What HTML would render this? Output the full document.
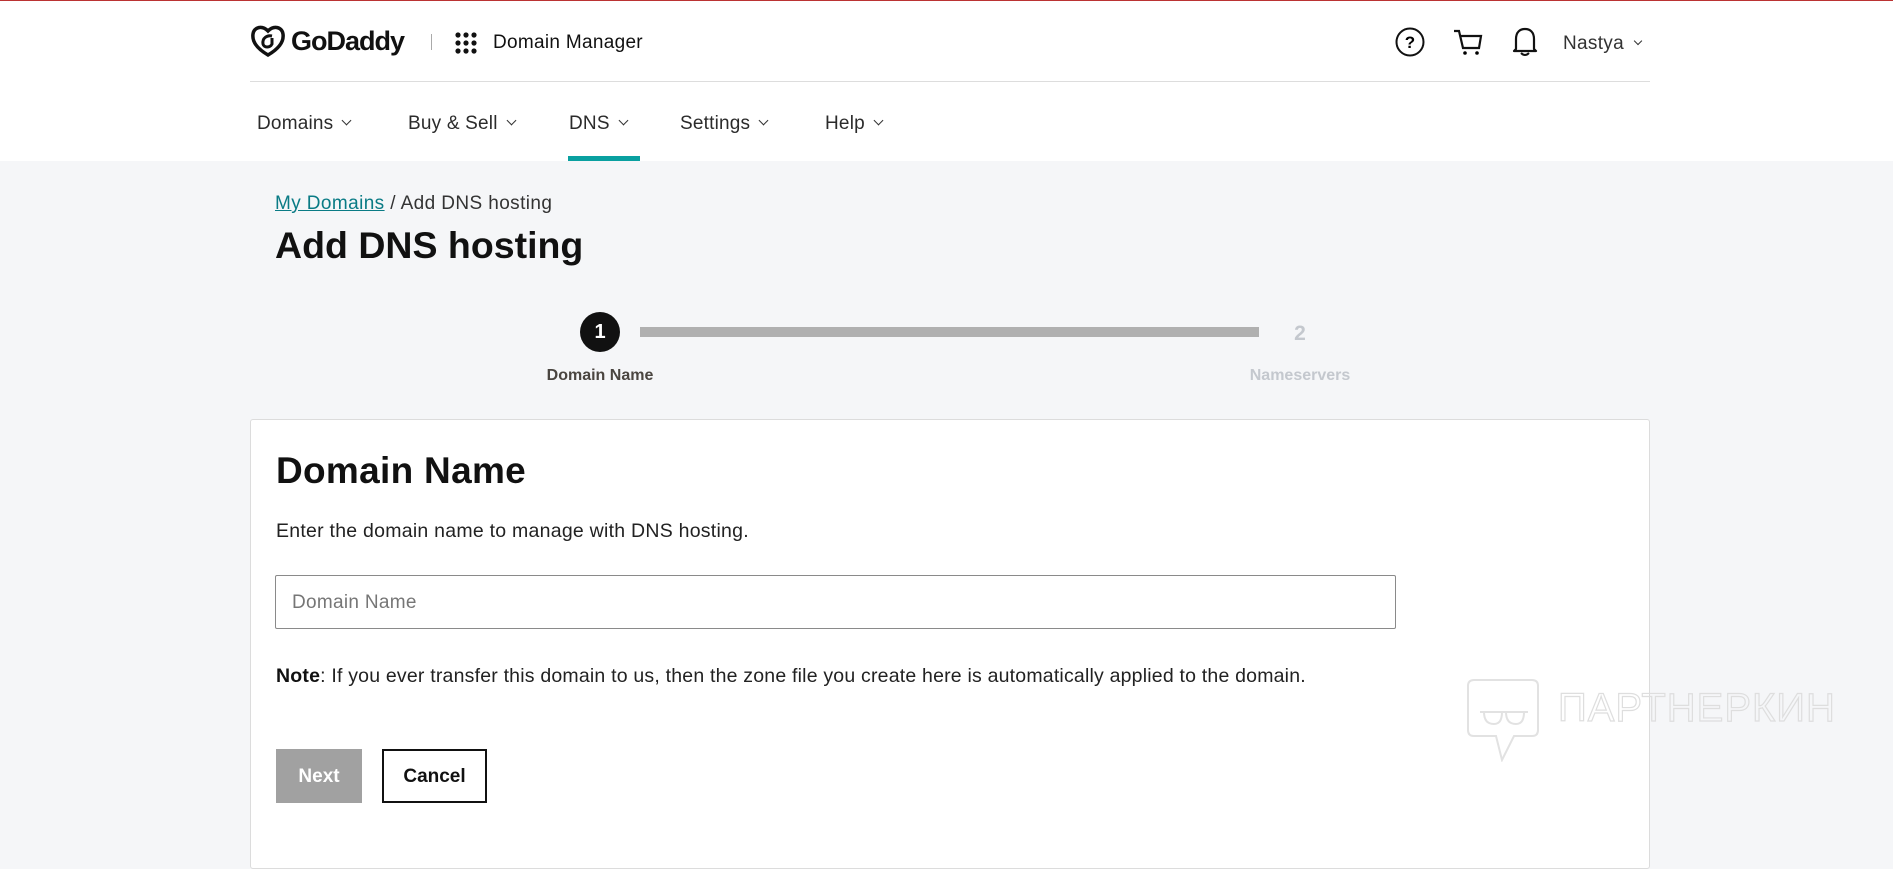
<!DOCTYPE html>
<html><head><meta charset="utf-8"><style>
*{margin:0;padding:0;box-sizing:border-box}
body{width:1893px;height:812px;overflow:hidden;background:#f5f6f8;font-family:"Liberation Sans",sans-serif;color:#111;position:relative}
.abs{position:absolute}
.hdr{position:absolute;left:0;top:0;width:1893px;height:161px;background:#fff;border-top:1px solid #b33}
.nav{position:absolute;top:112px;font-size:19px;color:#2b2b2b;white-space:nowrap;letter-spacing:0.2px}
.chev{display:inline-block;width:7px;height:7px;border-right:1.6px solid #333;border-bottom:1.6px solid #333;transform:rotate(45deg);margin-left:10px;position:relative;top:-5px}
</style></head><body>
<div class="hdr">
  <svg class="abs" style="left:250px;top:23px" width="36" height="34" viewBox="0 0 36 34"><path d="M18 31C6 24 2 17 3 10 4 3 12 1 18 7 24 1 32 3 33 10 34 17 30 24 18 31Z" fill="none" stroke="#111" stroke-width="3.5"/><path d="M22 12C17 11 12 14 13 20 14 24 20 24 22 20L22 14" fill="none" stroke="#111" stroke-width="3"/></svg>
  <div class="abs" style="left:291px;top:25px;font-size:27px;font-weight:bold;letter-spacing:-1px">GoDaddy</div>
  <div class="abs" style="left:431px;top:33px;width:1px;height:16px;background:#aaa"></div>
  <svg class="abs" style="left:455px;top:31px" width="22" height="22"><g fill="#111"><circle cx="3" cy="3" r="2.6"/><circle cx="11" cy="3" r="2.6"/><circle cx="19" cy="3" r="2.6"/><circle cx="3" cy="11" r="2.6"/><circle cx="11" cy="11" r="2.6"/><circle cx="19" cy="11" r="2.6"/><circle cx="3" cy="19" r="2.6"/><circle cx="11" cy="19" r="2.6"/><circle cx="19" cy="19" r="2.6"/></g></svg>
  <div class="abs" style="left:493px;top:31px;font-size:19px;letter-spacing:0.3px">Domain Manager</div>
  <svg class="abs" style="left:1395px;top:26px" width="30" height="30"><circle cx="15" cy="15" r="13.5" fill="none" stroke="#111" stroke-width="2"/><text x="15" y="21" font-size="17" font-weight="bold" text-anchor="middle" font-family="Liberation Sans">?</text></svg>
  <svg class="abs" style="left:1453px;top:27px" width="30" height="28"><path d="M1 3H6L10 20H26L28 8H8" fill="none" stroke="#111" stroke-width="2.2"/><circle cx="12" cy="25" r="1.8"/><circle cx="24" cy="25" r="1.8"/></svg>
  <svg class="abs" style="left:1512px;top:24px" width="26" height="32"><path d="M4 24V14C4 7 8 4 13 4 18 4 22 7 22 14V24L24 26H2Z" fill="none" stroke="#111" stroke-width="2.2" stroke-linejoin="round"/><path d="M9 28Q13 32 17 28" fill="none" stroke="#111" stroke-width="2"/></svg>
  <div class="abs" style="left:1563px;top:32px;font-size:19px;color:#333;letter-spacing:0.3px">Nastya<span class="chev" style="width:6px;height:6px;margin-left:11px"></span></div>
  <div class="abs" style="left:250px;top:80px;width:1400px;height:1px;background:#ddd"></div>
  <div class="nav" style="left:257px">Domains<span class="chev"></span></div>
  <div class="nav" style="left:408px">Buy &amp; Sell<span class="chev"></span></div>
  <div class="nav" style="left:569px">DNS<span class="chev"></span></div>
  <div class="nav" style="left:680px">Settings<span class="chev"></span></div>
  <div class="nav" style="left:825px">Help<span class="chev"></span></div>
  <div class="abs" style="left:568px;top:155px;width:72px;height:5px;background:#09a0a0"></div>
</div>
<div class="abs" style="left:275px;top:193px;font-size:19px;color:#333;letter-spacing:0.4px"><span style="color:#0a7b85;text-decoration:underline">My Domains</span> / Add DNS hosting</div>
<div class="abs" style="left:275px;top:224px;font-size:37.5px;font-weight:bold">Add DNS hosting</div>
<div class="abs" style="left:580px;top:312px;width:40px;height:40px;border-radius:50%;background:#111;color:#fff;font-weight:bold;font-size:20px;text-align:center;line-height:40px">1</div>
<div class="abs" style="left:640px;top:327px;width:619px;height:10px;background:#b0b0b0"></div>
<div class="abs" style="left:1280px;top:322px;width:40px;text-align:center;font-weight:bold;font-size:21px;color:#c4c8ce">2</div>
<div class="abs" style="left:520px;top:367px;width:160px;text-align:center;font-weight:bold;font-size:16px;color:#4a4540">Domain Name</div>
<div class="abs" style="left:1220px;top:367px;width:160px;text-align:center;font-weight:bold;font-size:16px;color:#c4c8ce">Nameservers</div>
<div class="abs" style="left:250px;top:419px;width:1400px;height:450px;background:#fff;border:1px solid #dcdcdc;border-radius:3px"></div>
<div class="abs" style="left:276px;top:450px;font-size:37px;font-weight:bold;letter-spacing:0.3px">Domain Name</div>
<div class="abs" style="left:276px;top:520px;font-size:19.5px;color:#222;letter-spacing:0.25px">Enter the domain name to manage with DNS hosting.</div>
<div class="abs" style="left:275px;top:575px;width:1121px;height:54px;border:1px solid #8a8a8a;border-radius:2px"></div>
<div class="abs" style="left:292px;top:592px;font-size:19px;color:#767676;letter-spacing:0.3px">Domain Name</div>
<div class="abs" style="left:276px;top:665px;font-size:19.5px;color:#222;letter-spacing:0.2px"><b style="color:#111">Note</b>: If you ever transfer this domain to us, then the zone file you create here is automatically applied to the domain.</div>
<div class="abs" style="left:276px;top:749px;width:86px;height:54px;background:#a1a1a1;color:#fff;font-weight:bold;font-size:19px;text-align:center;line-height:56px">Next</div>
<div class="abs" style="left:382px;top:749px;width:105px;height:54px;border:2px solid #111;font-weight:bold;font-size:19px;text-align:center;line-height:52px">Cancel</div>
<svg class="abs" style="left:1466px;top:678px" width="80" height="84"><path d="M8 2H66Q72 2 72 8V52Q72 58 66 58H48L36 82 30 58H8Q2 58 2 52V8Q2 2 8 2Z" fill="none" stroke="#e2e2e2" stroke-width="2"/><path d="M14 34H62M18 34Q18 46 28 46 36 46 36 34M40 34Q40 46 50 46 58 46 58 34" fill="none" stroke="#e2e2e2" stroke-width="2"/></svg>
<div class="abs" style="left:1558px;top:686px;font-size:40px;color:transparent;-webkit-text-stroke:1.2px #dedede;letter-spacing:1px">ПАРТНЕРКИН</div>
</body></html>
